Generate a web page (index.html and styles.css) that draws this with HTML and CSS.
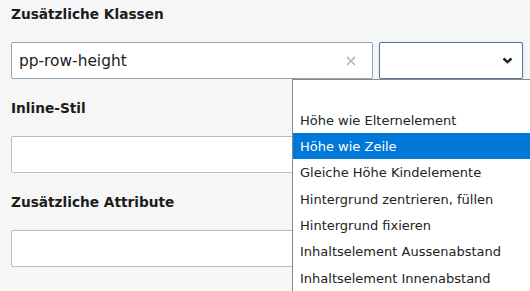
FILE: index.html
```html
<!DOCTYPE html>
<html lang="de">
<head>
    <meta charset="UTF-8">
    <link rel="stylesheet" href="styles.css">
    <title>Klassen</title>
</head>
<body>
    <div class="form">
        <div class="field">
            <label class="label">Zusätzliche Klassen</label>
            <div class="row">
                <div class="input input-active">
                    <span class="value">pp-row-height</span>
                    <svg class="clear" width="10" height="10" viewBox="0 0 10 10">
                        <path d="M1 1L9 9M9 1L1 9" stroke="#b3b3b3" stroke-width="1.6" fill="none"/>
                    </svg>
                </div>
                <div class="select">
                    <svg class="chevron" width="11" height="7" viewBox="0 0 11 7">
                        <path d="M1.5 1.5L5.5 5.2L9.5 1.5" stroke="#1f1f1f" stroke-width="2.4" fill="none"/>
                    </svg>
                </div>
            </div>
        </div>

        <div class="field">
            <label class="label">Inline-Stil</label>
            <div class="input"></div>
        </div>

        <div class="field">
            <label class="label">Zusätzliche Attribute</label>
            <div class="input"></div>
        </div>
    </div>

    <!-- open list of the select, cut off by the window -->
    <ul class="dropdown">
        <li class="option"></li>
        <li class="option">Höhe wie Elternelement</li>
        <li class="option selected">Höhe wie Zeile</li>
        <li class="option">Gleiche Höhe Kindelemente</li>
        <li class="option">Hintergrund zentrieren, füllen</li>
        <li class="option">Hintergrund fixieren</li>
        <li class="option">Inhaltselement Aussenabstand</li>
        <li class="option">Inhaltselement Innenabstand</li>
    </ul>
</body>
</html>
```

FILE: styles.css
```css
html, body {
    margin: 0;
    height: 100%;
    overflow: hidden;
}
body {
    background-color: #f6f6f6;
    font-family: "DejaVu Sans", Verdana, sans-serif;
    color: #1c1c1c;
    position: relative;
}
.form {
    padding: 4px 7px 0 11px;
}
.field {
    margin-bottom: 19px;
}
.label {
    display: block;
    height: 20px;
    line-height: 20px;
    margin-bottom: 18px;
    font-size: 13.7px;
    font-weight: bold;
}
.row {
    display: flex;
    gap: 6px;
}
.input {
    flex: 1;
    height: 37px;
    box-sizing: border-box;
    background-color: white;
    border: 1px solid #bcbcbc;
    border-radius: 2px;
    display: flex;
    align-items: center;
    padding: 0 16px 0 7px;
}
.input-active {
    border-color: #8ea2b9;
}
.value {
    flex: 1;
    font-size: 15.4px;
    color: #222;
}
.select {
    width: 144px;
    height: 37px;
    box-sizing: border-box;
    background-color: white;
    border: 1px solid #56779f;
    border-radius: 2px;
    box-shadow: 0 0 2px #b9d3ee;
    display: flex;
    align-items: center;
    justify-content: flex-end;
    padding-right: 9px;
}
.dropdown {
    position: absolute;
    left: 292px;
    right: 0;
    top: 79px;
    bottom: 0;
    margin: 0;
    padding: 0;
    list-style: none;
    background-color: white;
    border-top: 1px solid #8a8a8a;
    border-left: 1px solid #8a8a8a;
    overflow: hidden;
}
.option {
    height: 24.8px;
    padding-top: 1.5px;
    line-height: 26.3px;
    padding-left: 7px;
    font-size: 13px;
    color: #222;
    white-space: nowrap;
}
.selected {
    background-color: #0078d7;
    color: white;
}
```
